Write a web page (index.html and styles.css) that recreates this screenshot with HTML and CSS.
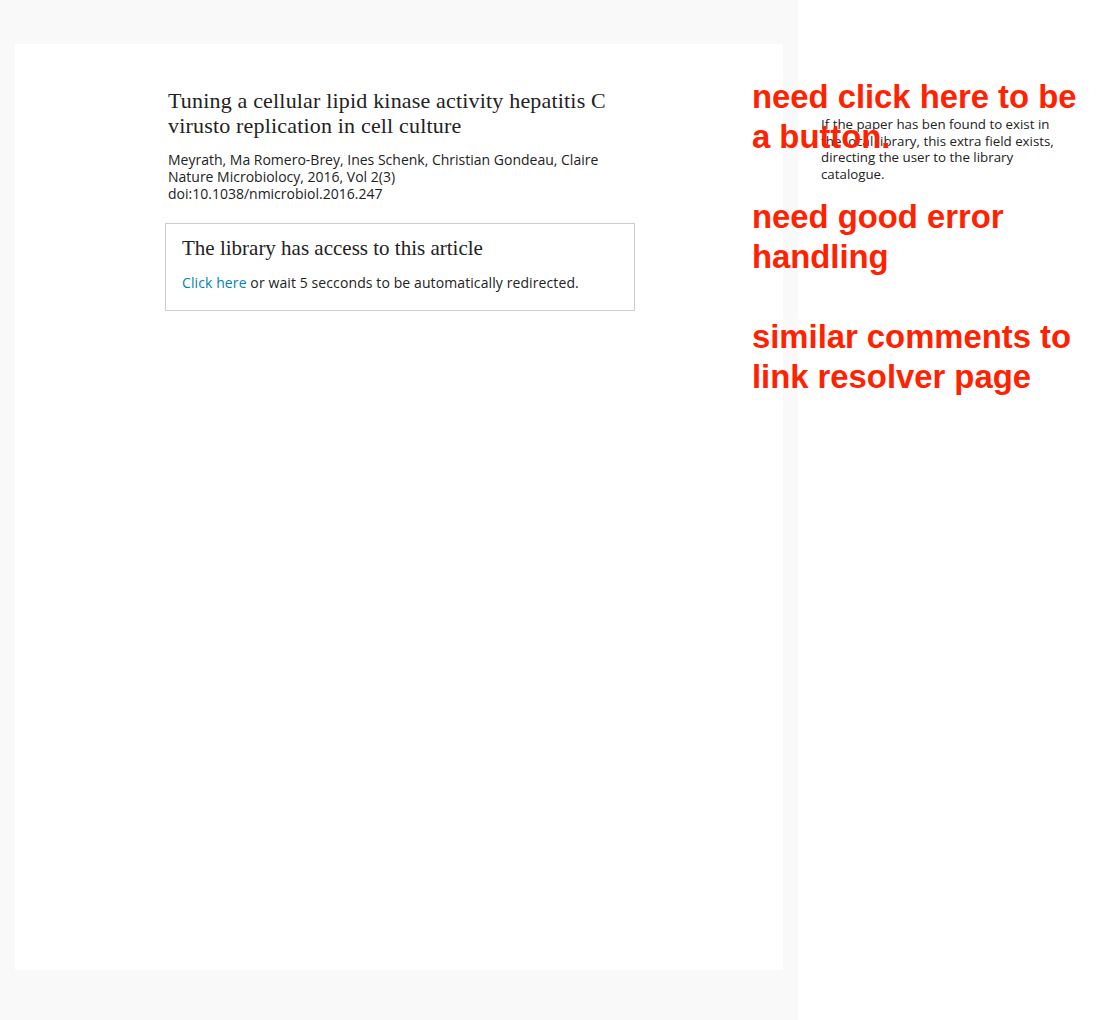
FILE: index.html
```html
<!DOCTYPE html>
<html>
<head>
<meta charset="utf-8">
<link rel="stylesheet" href="styles.css">
</head>
<body>
<div class="page">
  <div class="canvas">
    <div class="panel">
      <div class="content">
        <h1 class="title">Tuning a cellular lipid kinase activity hepatitis C virusto replication in cell culture</h1>
        <div class="meta">
          <div>Meyrath, Ma Romero-Brey, Ines Schenk, Christian Gondeau, Claire</div>
          <div>Nature Microbiolocy, 2016, Vol 2(3)</div>
          <div>doi:10.1038/nmicrobiol.2016.247</div>
        </div>
        <div class="access">
          <h2 class="access-title">The library has access to this article</h2>
          <p class="access-text"><a class="link" href="#">Click here</a> or wait 5 secconds to be automatically redirected.</p>
        </div>
      </div>
    </div>
  </div>
  <div class="side">
    <p class="note">If the paper has ben found to exist in the local library, this extra field exists, directing the user to the library catalogue.</p>
  </div>
  <div class="annotations">
    <p class="anno">need click here to be a button.</p>
    <p class="anno">need good error handling</p>
    <p class="anno">similar comments to link resolver page</p>
  </div>
</div>
</body>
</html>
```

FILE: styles.css
```css
html, body {
  margin: 0;
  padding: 0;
  background: #ffffff;
}
.page {
  position: relative;
  display: flex;
  width: 1100px;
  height: 1020px;
  overflow: hidden;
}
.canvas {
  width: 798px;
  height: 1020px;
  box-sizing: border-box;
  background: #f9f9f9;
  padding: 44px 15px 50px 15px;
}
.panel {
  background: #ffffff;
  height: 926px;
  box-sizing: border-box;
  padding: 44px 0 0 150px;
}
.content {
  width: 470px;
}
.title {
  margin: 0 0 0 3px;
  font-family: "Liberation Serif", serif;
  font-weight: normal;
  font-size: 22px;
  letter-spacing: 0.18px;
  line-height: 25px;
  color: #222222;
}
.meta {
  margin: 13px 0 0 3px;
  font-family: "Open Sans", sans-serif;
  font-size: 14px;
  line-height: 17px;
  color: #222222;
}
.access {
  margin-top: 21px;
  border: 1px solid #cccccc;
  padding: 12px 16px 19px 16px;
}
.access-title {
  margin: 0;
  font-family: "Liberation Serif", serif;
  font-weight: normal;
  font-size: 21px;
  line-height: 24px;
  color: #222222;
}
.access-text {
  margin: 14px 0 0 0;
  font-family: "Open Sans", sans-serif;
  font-size: 14px;
  letter-spacing: 0.1px;
  line-height: 17px;
  color: #222222;
}
.link {
  color: #0083b0;
  text-decoration: none;
}
.side {
  flex: 1;
  padding: 116px 0 0 23px;
}
.note {
  margin: 0;
  width: 234px;
  font-family: "Open Sans", sans-serif;
  font-size: 13.3px;
  line-height: 16.7px;
  color: #222222;
}
.annotations {
  position: absolute;
  left: 752px;
  top: 77px;
  width: 345px;
}
.anno {
  margin: 0 0 40px 0;
  font-family: "Liberation Sans", Arial, sans-serif;
  font-weight: bold;
  font-size: 32.8px;
  line-height: 40px;
  color: #ff2200;
}
```
